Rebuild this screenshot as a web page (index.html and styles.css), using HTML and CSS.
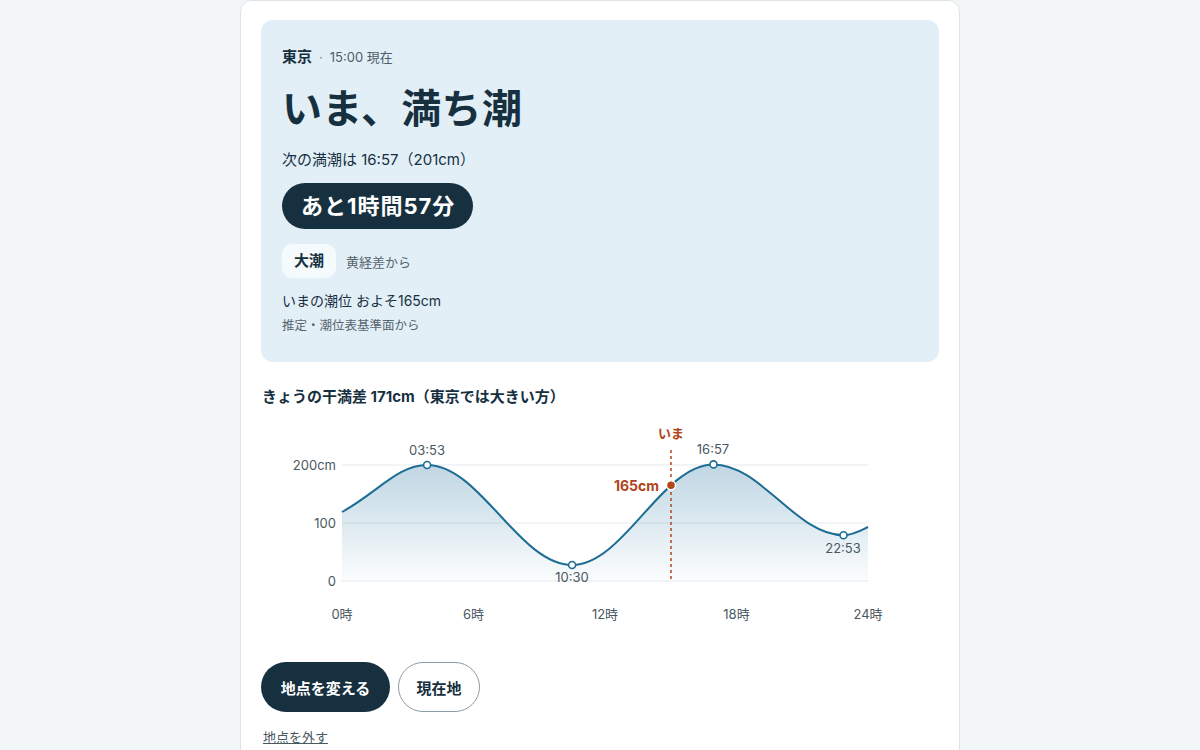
FILE: index.html
```html
<!DOCTYPE html>
<html lang="ja">
<head>
  <meta charset="UTF-8" />
  <title>いまの潮</title>
  <meta name="viewport" content="width=device-width, initial-scale=1.0" />
  <link rel="stylesheet" href="styles.css">
</head>
<body>
  <main class="card">
    <section class="hero">
      <p class="meta"><b>東京</b><span class="dot">·</span>15:00 現在</p>
      <h1>いま、満ち潮</h1>
      <p class="next">次の満潮は 16:57（201cm）</p>
      <div class="countdown">あと1時間57分</div>
      <div class="tide-kind">
        <span class="chip">大潮</span>
        <span class="hint">黄経差から</span>
      </div>
      <p class="level">いまの潮位 およそ165cm</p>
      <p class="note">推定・潮位表基準面から</p>
    </section>

    <h2>きょうの干満差 171cm（東京では大きい方）</h2>

    <!-- chart uses page coordinates via viewBox -->
    <svg class="chart" viewBox="261 420 678 210" width="678" height="210">
      <defs>
        <linearGradient id="fill" x1="0" y1="0" x2="0" y2="1">
          <stop offset="0" stop-color="#2a78a3" stop-opacity="0.3" />
          <stop offset="1" stop-color="#2a78a3" stop-opacity="0.02" />
        </linearGradient>
      </defs>

      <line class="grid" x1="342" y1="465" x2="868" y2="465" />
      <line class="grid" x1="342" y1="523" x2="868" y2="523" />
      <line class="grid" x1="342" y1="581" x2="868" y2="581" />

      <path class="area" d="M342,512 C378,492 398,465 427.1,465 C479.9,465 519.3,565 572.1,565 C623.6,565 662,464.4 713.5,464.4 C760.8,464.4 796.2,535.2 843.5,535.2 C853,535.2 860,531 868,527 L868,581 L342,581 Z" />
      <path class="curve" d="M342,512 C378,492 398,465 427.1,465 C479.9,465 519.3,565 572.1,565 C623.6,565 662,464.4 713.5,464.4 C760.8,464.4 796.2,535.2 843.5,535.2 C853,535.2 860,531 868,527" />

      <text class="axis" x="336" y="469.5" text-anchor="end">200cm</text>
      <text class="axis" x="336" y="527.5" text-anchor="end">100</text>
      <text class="axis" x="336" y="585.5" text-anchor="end">0</text>

      <text class="axis" x="342" y="618.5" text-anchor="middle">0時</text>
      <text class="axis" x="473.5" y="618.5" text-anchor="middle">6時</text>
      <text class="axis" x="605" y="618.5" text-anchor="middle">12時</text>
      <text class="axis" x="736.5" y="618.5" text-anchor="middle">18時</text>
      <text class="axis" x="868" y="618.5" text-anchor="middle">24時</text>

      <line class="now-line" x1="671" y1="450" x2="671" y2="581" />
      <text class="now-label" x="671" y="438" text-anchor="middle">いま</text>

      <circle class="point" cx="427.1" cy="465" r="3.5" />
      <circle class="point" cx="572.1" cy="565" r="3.5" />
      <circle class="point" cx="713.5" cy="464.4" r="3.5" />
      <circle class="point" cx="843.5" cy="535.2" r="3.5" />

      <text class="axis" x="427" y="455" text-anchor="middle">03:53</text>
      <text class="axis" x="572" y="582" text-anchor="middle">10:30</text>
      <text class="axis" x="713" y="454" text-anchor="middle">16:57</text>
      <text class="axis" x="843" y="553" text-anchor="middle">22:53</text>

      <circle class="now-dot" cx="671" cy="485.3" r="4.5" />
      <text class="now-value" x="659" y="490.5" text-anchor="end">165cm</text>
    </svg>

    <div class="actions">
      <button class="btn primary">地点を変える</button>
      <button class="btn outline">現在地</button>
    </div>
    <a href="#" class="unset">地点を外す</a>
  </main>
</body>
</html>
```

FILE: styles.css
```css
* {
  box-sizing: border-box;
}

body {
  margin: 0;
  background: #f3f6f8;
  color: #17303f;
  font-family: Inter, "Noto Sans CJK JP", sans-serif;
}

p {
  margin: 0;
}

.card {
  width: 720px;
  margin: 0 auto;
  min-height: 760px;
  background: #fff;
  border: 1px solid #dfe3e6;
  border-radius: 12px;
  padding: 19px 20px 20px;
}

/* Hero panel */
.hero {
  background: #e2eff7;
  border-radius: 12px;
  padding: 27px 21px 27px;
}

.meta {
  font-size: 13px;
  line-height: 20px;
  color: #4f5e68;
}

.meta b {
  font-size: 15px;
  color: #17303f;
}

.meta .dot {
  margin: 0 7px;
  color: #7a8790;
}

h1 {
  margin: 18px 0 0;
  font-size: 40px;
  line-height: 48px;
  font-weight: 700;
  letter-spacing: 0.3px;
}

.next {
  margin-top: 16px;
  font-size: 15px;
  line-height: 22px;
}

.countdown {
  display: inline-block;
  margin-top: 12px;
  background: #173040;
  color: #fff;
  font-size: 22px;
  font-weight: 700;
  line-height: 28px;
  letter-spacing: 1px;
  padding: 9px 18px 9px 19px;
  border-radius: 23px;
}

.tide-kind {
  display: flex;
  align-items: center;
  gap: 10px;
  margin-top: 15px;
}

.chip {
  background: #f5fafd;
  border-radius: 10px;
  padding: 6px 12px;
  font-size: 15px;
  line-height: 22px;
  font-weight: 700;
}

.hint {
  font-size: 13px;
  color: #56646e;
}

.level {
  margin-top: 13px;
  font-size: 14px;
  line-height: 20px;
}

.note {
  margin-top: 6px;
  font-size: 12.5px;
  line-height: 18px;
  color: #56646e;
}

h2 {
  margin: 24px 0 0 1px;
  font-size: 15px;
  line-height: 22px;
  font-weight: 700;
}

/* Chart */
.chart {
  display: block;
  margin-top: 12px;
  overflow: visible;
}

.chart .grid {
  stroke: #e6e9eb;
  stroke-width: 1;
}

.chart .area {
  fill: url(#fill);
}

.chart .curve {
  fill: none;
  stroke: #1d6c93;
  stroke-width: 2;
}

.chart .point {
  fill: #fff;
  stroke: #1d6c93;
  stroke-width: 1.6;
}

.chart .axis {
  font-size: 13px;
  fill: #4a5862;
}

.chart .now-line {
  stroke: #b4461a;
  stroke-width: 1.5;
  stroke-dasharray: 3 3;
}

.chart .now-dot {
  fill: #b4461a;
  stroke: #fff;
  stroke-width: 1.5;
}

.chart .now-label,
.chart .now-value {
  fill: #b0441a;
  font-weight: 700;
}

.chart .now-label {
  font-size: 13px;
}

.chart .now-value {
  font-size: 14px;
}

/* Actions */
.actions {
  display: flex;
  gap: 8px;
  margin-top: 32px;
}

.btn {
  height: 50px;
  border-radius: 25px;
  font-family: inherit;
  font-size: 15px;
  font-weight: 700;
  cursor: pointer;
}

.btn.primary {
  width: 129px;
  background: #173040;
  color: #fff;
  border: none;
}

.btn.outline {
  width: 82px;
  background: #fff;
  color: #17303f;
  border: 1px solid #8d9ca4;
}

.unset {
  display: inline-block;
  margin: 16px 0 0 2px;
  font-size: 13px;
  line-height: 18px;
  color: #4a5862;
}
```
